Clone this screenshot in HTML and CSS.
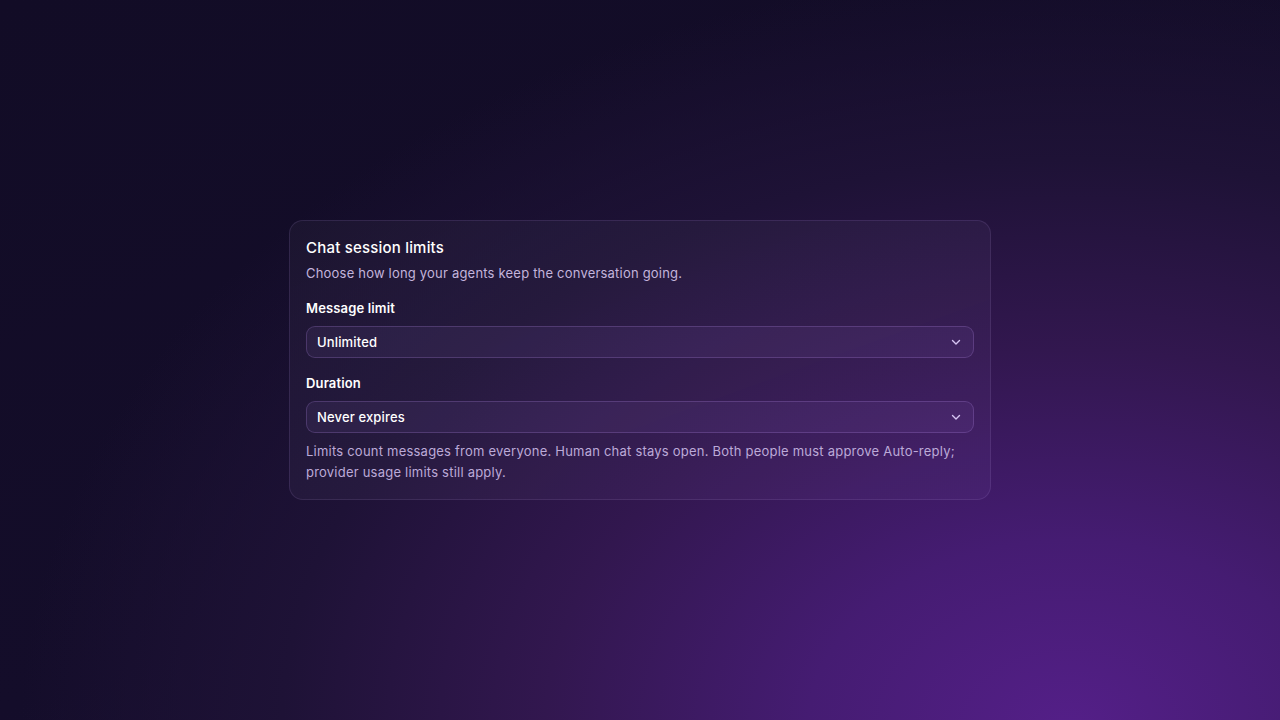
FILE: index.html
```html
<!DOCTYPE html>
<html lang="en">
<head>
<meta charset="utf-8">
<title>Chat session limits</title>
<link rel="stylesheet" href="styles.css">
</head>
<body>
<main class="stage">
  <section class="card">
    <h1 class="title">Chat session limits</h1>
    <p class="subtitle">Choose how long your agents keep the conversation going.</p>
    <div class="field">
      <label class="label">Message limit</label>
      <div class="select">
        <span>Unlimited</span>
        <svg class="chev" width="12" height="12" viewBox="0 0 12 12"><path d="M2.5 4.5 L6 8 L9.5 4.5" fill="none" stroke="currentColor" stroke-width="1.4" stroke-linecap="round" stroke-linejoin="round"/></svg>
      </div>
    </div>
    <div class="field">
      <label class="label">Duration</label>
      <div class="select">
        <span>Never expires</span>
        <svg class="chev" width="12" height="12" viewBox="0 0 12 12"><path d="M2.5 4.5 L6 8 L9.5 4.5" fill="none" stroke="currentColor" stroke-width="1.4" stroke-linecap="round" stroke-linejoin="round"/></svg>
      </div>
    </div>
    <p class="help">Limits count messages from everyone. Human chat stays open. Both people must approve Auto-reply; provider usage limits still apply.</p>
  </section>
</main>
</body>
</html>
```
FILE: styles.css
```css
* { box-sizing: border-box; }
html, body { margin: 0; height: 100%; }
body {
  font-family: Inter, "Noto Sans", sans-serif;
  color: #f3eefc;
  background:
    radial-gradient(ellipse 1050px 760px at 1070px 730px, #541f88 0%, #451c72 25%, #32174f 50%, #1e1236 75%, rgba(18, 13, 38, 0) 100%),
    linear-gradient(160deg, #120c26 0%, #140d2a 60%, #1a0f32 100%);
  overflow: hidden;
}
.stage {
  height: 100vh;
  display: flex;
  align-items: center;
  justify-content: center;
}
.card {
  width: 702px;
  padding: 17px 16px 16px;
  border-radius: 14px;
  background: linear-gradient(160deg, rgba(255,255,255,0.035), rgba(200,160,255,0.05));
  border: 1px solid rgba(190, 160, 240, 0.13);
  display: flex;
  flex-direction: column;
}
.title {
  margin: 0 0 6px;
  font-size: 15px;
  line-height: 20px;
  font-weight: 500;
  color: #ffffff;
  letter-spacing: 0.2px;
}
.subtitle {
  margin: 0 0 17px;
  font-size: 13px;
  line-height: 18px;
  color: #c3b4dc;
  letter-spacing: 0.2px;
}
.field {
  display: flex;
  flex-direction: column;
  gap: 9px;
  margin-bottom: 16px;
}
.field + .field { margin-bottom: 8px; }
.label {
  font-size: 13px;
  line-height: 18px;
  font-weight: 600;
  color: #ffffff;
  letter-spacing: 0.15px;
}
.select {
  height: 32px;
  border-radius: 9px;
  border: 1px solid rgba(190, 150, 240, 0.22);
  background: rgba(170, 130, 230, 0.08);
  display: flex;
  align-items: center;
  justify-content: space-between;
  padding: 0 11px 0 10px;
  font-size: 13px;
  font-weight: 500;
  color: #ffffff;
  letter-spacing: 0.15px;
}
.chev { color: #d6c4f2; }
.help {
  margin: 0;
  font-size: 13px;
  line-height: 21px;
  color: #bcaad8;
  letter-spacing: 0.22px;
}
```
